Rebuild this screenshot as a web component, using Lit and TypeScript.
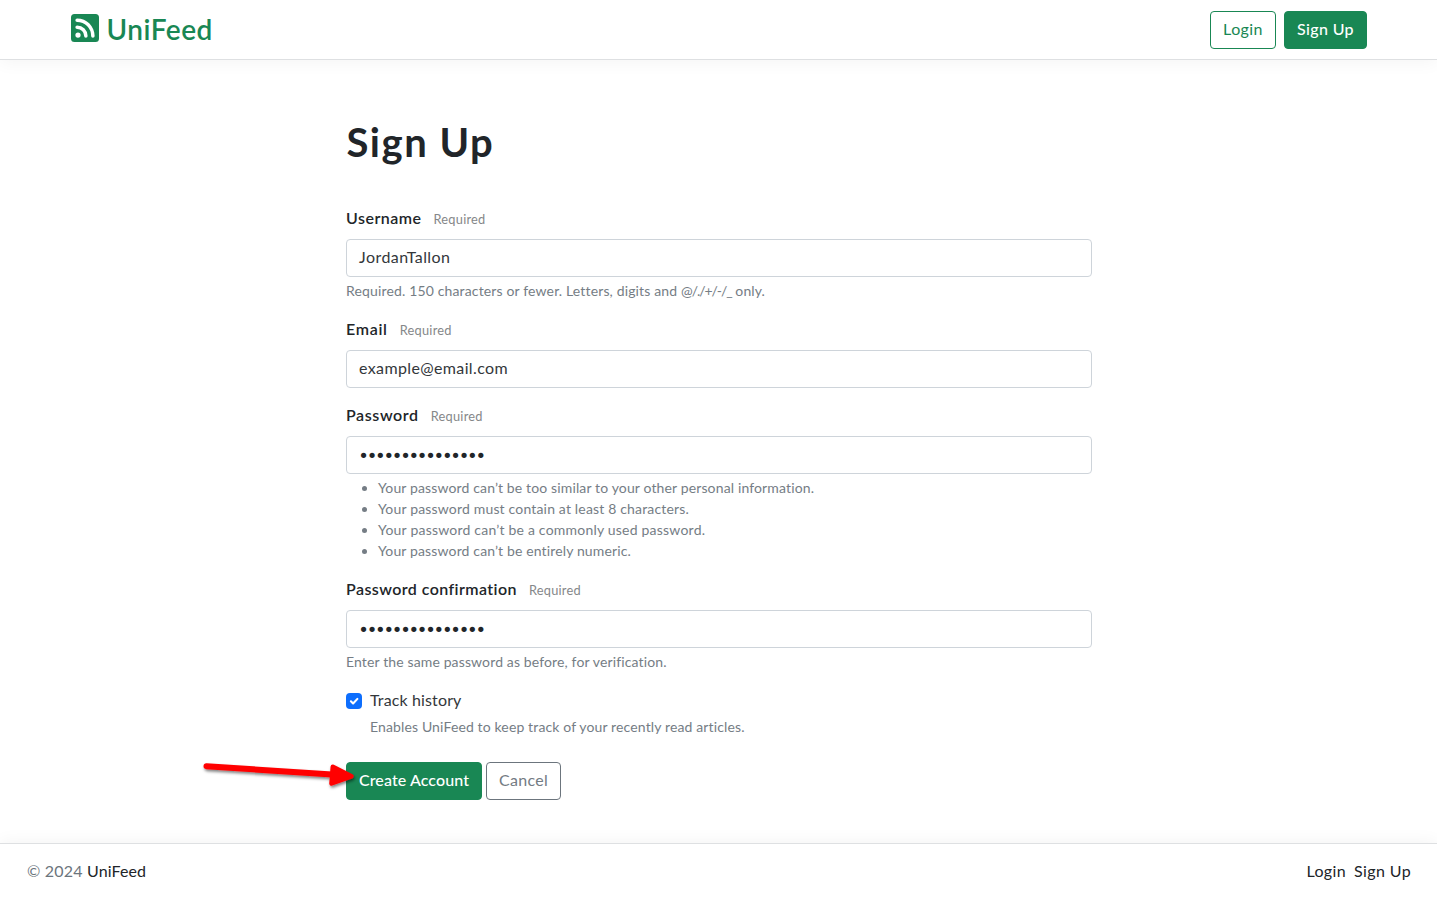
import { LitElement, html, svg, css, nothing } from "lit";
import { customElement } from "lit/decorators.js";

interface Line { text: string; track: number; }
interface Field { label: Line; value: Line; secret?: boolean; help?: Line[]; rules?: Line[]; }

const FIELDS: Field[] = [
  {
    label: { text: "Username", track: 0.48 },
    value: { text: "JordanTallon", track: 0.455 },
    help: [
      { text: "Required. 150 characters or fewer. Letters, digits and ", track: 0.15 },
      { text: "@/./+/-/_", track: -1.05 },
      { text: " only.", track: 0.1 },
    ],
  },
  {
    label: { text: "Email", track: 0.7 },
    value: { text: "example@email.com", track: 0.372 },
  },
  {
    label: { text: "Password", track: 0.6 },
    value: { text: "•".repeat(15), track: -2.25 },
    secret: true,
    rules: [
      { text: "Your password can’t be too similar to your other personal information.", track: 0.135 },
      { text: "Your password must contain at least 8 characters.", track: 0.17 },
      { text: "Your password can’t be a commonly used password.", track: 0.213 },
      { text: "Your password can’t be entirely numeric.", track: 0.14 },
    ],
  },
  {
    label: { text: "Password confirmation", track: 0.42 },
    value: { text: "•".repeat(15), track: -2.25 },
    secret: true,
    help: [{ text: "Enter the same password as before, for verification.", track: 0.13 }],
  },
];

const spaced = (l: Line) => html`<span style="letter-spacing:${l.track}px">${l.text}</span>`;

@customElement("app-root")
export class AppRoot extends LitElement {
  static styles = css`
    :host {
      display: flex;
      flex-direction: column;
      height: 898px;
      overflow: hidden;
      background: #fff;
      color: #212529;
      font: 400 16px/22px Lato, "Open Sans", sans-serif;
      white-space: nowrap;
    }
    * { box-sizing: border-box; }
    header {
      height: 60px;
      flex: none;
      border-bottom: 1px solid #dee0e2;
      box-shadow: 0 3px 16px rgba(0, 0, 0, 0.045);
    }
    .bar {
      width: 1296px;
      height: 59px;
      margin: 0 auto;
      display: flex;
      align-items: center;
      justify-content: space-between;
    }
    .brand {
      display: flex;
      gap: 8px;
      color: #198754;
      font-size: 28px;
      font-weight: 600;
      line-height: 28px;
      letter-spacing: 0.5px;
      padding-bottom: 3px;
    }
    .brand svg { display: block; }
    .brand span { line-height: 30px; height: 28px; }
    .actions { display: flex; gap: 8px; }
    .btn {
      height: 38px;
      padding: 6px 0 6px 1px;
      border: 1px solid #198754;
      border-radius: 4px;
      text-align: center;
      color: #198754;
    }
    .btn.solid { background: #198754; color: #fff; font-weight: 500; }
    .btn.muted { border-color: #6c757d; color: #737b83; }
    .login { width: 66px; letter-spacing: 0.4px; }
    .join { width: 83px; letter-spacing: 0.36px; }
    .create { width: 136px; letter-spacing: 0.1px; }
    .cancel { width: 75px; letter-spacing: 0.285px; }
    main {
      width: 746px;
      flex: 1;
      margin: 0 auto;
      padding-top: 59px;
    }
    h1 {
      margin: 0 0 40px;
      padding-left: 1px;
      height: 48px;
      font-size: 40px;
      font-weight: 700;
      line-height: 46px;
      letter-spacing: 1.5px;
    }
    .field { margin-bottom: 16px; }
    .label { display: flex; height: 32px; padding-left: 0.5px; font-weight: 600; }
    .label small {
      margin-left: 12px;
      font-size: 12.8px;
      font-weight: 400;
      line-height: 24px;
      letter-spacing: 0.244px;
      color: #858789;
    }
    .control {
      height: 38px;
      padding: 6px 12.5px;
      border: 1px solid #ced4da;
      border-radius: 4px;
      color: #33373b;
    }
    .secret {
      padding-left: 11.8px;
      font-family: "DejaVu Sans", sans-serif;
      font-size: 18px;
      line-height: 26px;
      color: #212529;
    }
    .help {
      margin-top: 4px;
      padding-left: 0.5px;
      height: 21px;
      font-size: 14px;
      line-height: 20px;
      color: #757d85;
    }
    ul { margin: 4px 0 0; padding-left: 32.5px; font-size: 14px; color: #757d85; }
    li { height: 21px; line-height: 20px; }
    .check { display: flex; gap: 8px; }
    .check svg { display: block; margin-top: 4px; flex: none; }
    .check .text { height: 24px; padding-left: 0.5px; letter-spacing: 0.136px; color: #33373b; }
    .submit { position: relative; display: flex; gap: 4px; margin-top: 24px; }
    .arrow { position: absolute; left: -145.5px; top: -7.5px; pointer-events: none; }
    footer {
      flex: none;
      height: 55px;
      border-top: 1px solid #dee0e2;
      padding: 16px 26px 0 27px;
      display: flex;
      justify-content: space-between;
      box-shadow: 0 -1px 16px rgba(0, 0, 0, 0.05);
    }
    .copy { color: #6c757d; letter-spacing: 0.2px; }
    .copy b { font-weight: 400; color: #212529; letter-spacing: 0.09px; }
    nav { display: flex; gap: 8px; letter-spacing: 0.38px; }
  `;

  private field(f: Field) {
    return html`<div class="field">
      <div class="label">${spaced(f.label)}<small>Required</small></div>
      <div class="control ${f.secret ? "secret" : ""}">${spaced(f.value)}</div>
      ${f.help ? html`<div class="help">${f.help.map(spaced)}</div>` : nothing}
      ${f.rules ? html`<ul>${f.rules.map((r) => html`<li>${spaced(r)}</li>`)}</ul>` : nothing}
    </div>`;
  }

  render() {
    return html`
      <header>
        <div class="bar">
          <div class="brand">
            <svg width="28" height="28" viewBox="0 0 16 16" fill="currentColor">
              <path d="M2 0a2 2 0 0 0-2 2v12a2 2 0 0 0 2 2h12a2 2 0 0 0 2-2V2a2 2 0 0 0-2-2zm1.5 2.5c5.523 0 10 4.477 10 10a1 1 0 1 1-2 0 8 8 0 0 0-8-8 1 1 0 0 1 0-2m0 4a6 6 0 0 1 6 6 1 1 0 1 1-2 0 4 4 0 0 0-4-4 1 1 0 0 1 0-2m.5 7a1.5 1.5 0 1 1 0-3 1.5 1.5 0 0 1 0 3" />
            </svg>
            <span>UniFeed</span>
          </div>
          <div class="actions">
            <div class="btn login">Login</div>
            <div class="btn solid join">Sign Up</div>
          </div>
        </div>
      </header>
      <main>
        <h1>Sign Up</h1>
        ${FIELDS.map((f) => this.field(f))}
        <div class="check">
          <svg width="16" height="16" viewBox="0 0 16 16">
            <rect width="16" height="16" rx="4" fill="#0d6efd" />
            <path d="M4.9 8.3l2.2 2.2 4.3-4.6" fill="none" stroke="#fff" stroke-width="2.1" stroke-linecap="round" stroke-linejoin="round" />
          </svg>
          <div>
            <div class="text">Track history</div>
            <div class="help">${spaced({ text: "Enables UniFeed to keep track of your recently read articles.", track: 0.132 })}</div>
          </div>
        </div>
        <div class="submit">
          <div class="btn solid create">Create Account</div>
          <div class="btn muted cancel">Cancel</div>
          <svg class="arrow" width="160" height="40" viewBox="0 0 160 40">
            <defs>
              <filter id="shade" x="-10%" y="-30%" width="120%" height="180%">
                <feDropShadow dx="1" dy="2" stdDeviation="1.5" flood-color="#000" flood-opacity="0.5" />
              </filter>
            </defs>
            ${svg`<g filter="url(#shade)" stroke="#f00" stroke-linecap="round" stroke-linejoin="round">
              <path d="M6.5 11.2L132 19.6" stroke-width="6" />
              <path d="M132.8 11.8L151.5 21.3L131.5 28.4Z" fill="#f00" stroke-width="4.5" />
            </g>`}
          </svg>
        </div>
      </main>
      <footer>
        <div class="copy">© 2024 <b>UniFeed</b></div>
        <nav><span>Login</span><span>Sign Up</span></nav>
      </footer>
    `;
  }
}
